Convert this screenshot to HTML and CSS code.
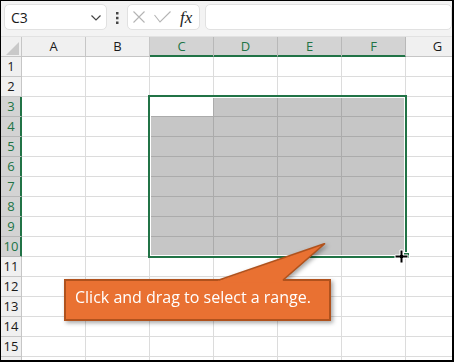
FILE: index.html
```html
<!DOCTYPE html>
<html lang="en">

<head>
    <meta charset="UTF-8">
    <title>Select a range</title>
    <link rel="stylesheet" href="styles.css">
</head>

<body>
    <div class="frame">
        <header class="toolbar">
            <div class="name-box">
                <span>C3</span>
                <svg class="chevron" width="10" height="6" viewBox="0 0 10 6">
                    <polyline points="0.5,0.5 5,5 9.5,0.5" fill="none" stroke="#444" stroke-width="1.2" />
                </svg>
            </div>
            <svg class="more" width="4" height="12" viewBox="0 0 4 12">
                <rect x="1" y="0" width="2.5" height="2.5" fill="#444" />
                <rect x="1" y="4.8" width="2.5" height="2.5" fill="#444" />
                <rect x="1" y="9.5" width="2.5" height="2.5" fill="#444" />
            </svg>
            <div class="fx-buttons">
                <svg class="cancel" width="12" height="12" viewBox="0 0 12 12">
                    <path d="M0.5 0.5 L11.5 11.5 M11.5 0.5 L0.5 11.5" stroke="#b4b4b4" stroke-width="1.1" />
                </svg>
                <svg class="enter" width="17" height="12" viewBox="0 0 17 12">
                    <polyline points="0.5,4 6,11 16.5,0.5" fill="none" stroke="#b4b4b4" stroke-width="1.1" />
                </svg>
                <span class="fx">fx</span>
            </div>
            <div class="formula-input"></div>
        </header>

        <section class="sheet">
            <div class="grid">
                <div class="hd corner"><svg width="13" height="13" viewBox="0 0 13 13"><polygon points="13,0 13,13 0,13" fill="#c9c9c9" /></svg></div>
                <div class="hd">A</div><div class="hd">B</div><div class="hd on">C</div><div class="hd on">D</div><div class="hd on">E</div><div class="hd on">F</div><div class="hd">G</div>

                <div class="rh">1</div><div class="c"></div><div class="c"></div><div class="c"></div><div class="c"></div><div class="c"></div><div class="c"></div><div class="c"></div>
                <div class="rh">2</div><div class="c"></div><div class="c"></div><div class="c"></div><div class="c"></div><div class="c"></div><div class="c"></div><div class="c"></div>
                <div class="rh on">3</div><div class="c"></div><div class="c"></div><div class="c act"></div><div class="c on"></div><div class="c on"></div><div class="c on"></div><div class="c"></div>
                <div class="rh on">4</div><div class="c"></div><div class="c"></div><div class="c on"></div><div class="c on"></div><div class="c on"></div><div class="c on"></div><div class="c"></div>
                <div class="rh on">5</div><div class="c"></div><div class="c"></div><div class="c on"></div><div class="c on"></div><div class="c on"></div><div class="c on"></div><div class="c"></div>
                <div class="rh on">6</div><div class="c"></div><div class="c"></div><div class="c on"></div><div class="c on"></div><div class="c on"></div><div class="c on"></div><div class="c"></div>
                <div class="rh on">7</div><div class="c"></div><div class="c"></div><div class="c on"></div><div class="c on"></div><div class="c on"></div><div class="c on"></div><div class="c"></div>
                <div class="rh on">8</div><div class="c"></div><div class="c"></div><div class="c on"></div><div class="c on"></div><div class="c on"></div><div class="c on"></div><div class="c"></div>
                <div class="rh on">9</div><div class="c"></div><div class="c"></div><div class="c on"></div><div class="c on"></div><div class="c on"></div><div class="c on"></div><div class="c"></div>
                <div class="rh on">10</div><div class="c"></div><div class="c"></div><div class="c on"></div><div class="c on"></div><div class="c on"></div><div class="c on"></div><div class="c"></div>
                <div class="rh">11</div><div class="c"></div><div class="c"></div><div class="c"></div><div class="c"></div><div class="c"></div><div class="c"></div><div class="c"></div>
                <div class="rh">12</div><div class="c"></div><div class="c"></div><div class="c"></div><div class="c"></div><div class="c"></div><div class="c"></div><div class="c"></div>
                <div class="rh">13</div><div class="c"></div><div class="c"></div><div class="c"></div><div class="c"></div><div class="c"></div><div class="c"></div><div class="c"></div>
                <div class="rh">14</div><div class="c"></div><div class="c"></div><div class="c"></div><div class="c"></div><div class="c"></div><div class="c"></div><div class="c"></div>
                <div class="rh">15</div><div class="c"></div><div class="c"></div><div class="c"></div><div class="c"></div><div class="c"></div><div class="c"></div><div class="c"></div>
                <div class="rh"></div><div class="c"></div><div class="c"></div><div class="c"></div><div class="c"></div><div class="c"></div><div class="c"></div><div class="c"></div>
            </div>

            <!-- overlays: selection outline, fill handle, mouse cursor, callout -->
            <div class="selection"></div>
            <div class="fill-handle"></div>
            <svg class="cursor" width="15" height="15" viewBox="0 0 15 15">
                <path d="M6 1 H9 V6 H14 V9 H9 V14 H6 V9 H1 V6 H6 Z" fill="#000" stroke="#fff" stroke-width="1" />
            </svg>

            <div class="callout">
                <div class="callout-box">Click and drag to select a range.</div>
                <svg class="callout-tail" width="267" height="40" viewBox="0 0 267 40">
                    <polygon points="149.3,39.5 261,0.5 216.7,39.5" fill="#e97132" />
                    <polyline points="155,37 261,0.5 219,37" fill="none" stroke="#b0521d" stroke-width="1.6" />
                </svg>
            </div>
        </section>
    </div>
</body>

</html>
```

FILE: styles.css
```css
*,
*::before,
*::after {
    box-sizing: border-box;
    margin: 0;
    padding: 0;
}

:root {
    --green: #217346;
    --grid: #dcdcdc;
    --head: #f0f0f0;
    --head-on: #d3d3d3;
    --orange: #e97132;
}

body {
    width: 454px;
    height: 362px;
    overflow: hidden;
    background: #fff;
    font-family: "Open Sans", "Noto Sans", sans-serif;
    color: #222;
}

.frame {
    width: 454px;
    height: 362px;
    border: solid #000;
    border-width: 1px 2px 2px 1px;
    display: flex;
    flex-direction: column;
    overflow: hidden;
}

/* formula bar */
.toolbar {
    flex: none;
    height: 36px;
    background: #f3f3f3;
    border-bottom: 1px solid #e2e2e2;
    display: flex;
    align-items: flex-start;
    padding: 3px 0 0 3px;
}

.name-box,
.fx-buttons,
.formula-input {
    height: 26px;
    background: #fff;
    border: 1px solid #e1e1e1;
    border-radius: 5px;
}

.name-box {
    width: 103px;
    display: flex;
    align-items: center;
    justify-content: space-between;
    padding: 0 5px 0 6px;
    font-size: 14px;
    color: #1a1a1a;
}

.chevron {
    margin-top: 1px;
}

.more {
    margin: 8px 8px 0 8px;
}

.fx-buttons {
    width: 73px;
    display: flex;
    align-items: center;
    padding-left: 5px;
}

.enter {
    margin-left: 9px;
}

.fx {
    margin-left: 9px;
    font-family: "Liberation Serif", serif;
    font-style: italic;
    font-size: 17px;
    color: #222;
    line-height: 1;
}

.formula-input {
    margin-left: 5px;
    flex: 1;
}

/* sheet */
.sheet {
    position: relative;
    flex: 1;
    overflow: hidden;
}

.grid {
    display: grid;
    grid-template-columns: 21px repeat(7, 64px);
    grid-auto-rows: 20px;
}

.hd,
.rh,
.c {
    border-right: 1px solid var(--grid);
    border-bottom: 1px solid var(--grid);
}

.hd,
.rh {
    background: var(--head);
    border-color: #c6c6c6;
    font-size: 13px;
    line-height: 19px;
    text-align: center;
    color: #1a1a1a;
}

.hd.on,
.rh.on {
    background: var(--head-on);
    color: var(--green);
    border-color: #b8b8b8;
}

.hd.on {
    border-bottom-color: var(--green);
    box-shadow: inset 0 -1px 0 var(--green);
}

.rh.on {
    border-right-color: var(--green);
    box-shadow: inset -1px 0 0 var(--green);
}

.corner {
    display: flex;
    align-items: flex-end;
    justify-content: flex-end;
    padding: 0 2px 1px 0;
}

.c.on {
    background: #c6c6c6;
    border-color: #ababab;
}

.c.act {
    border-color: #ababab;
}

.selection {
    position: absolute;
    left: 147px;
    top: 58px;
    width: 259px;
    height: 163px;
    border: 2px solid var(--green);
    box-shadow: inset 0 0 0 1px #fff;
}

.fill-handle {
    position: absolute;
    left: 402px;
    top: 215px;
    width: 7px;
    height: 7px;
    background: var(--green);
    border: 1px solid #fff;
}

.cursor {
    position: absolute;
    left: 393px;
    top: 212px;
}

/* callout */
.callout {
    position: absolute;
    left: 63px;
    top: 206px;
    width: 267px;
    height: 78px;
    filter: drop-shadow(2px 2px 2px rgba(0, 0, 0, 0.35));
}

.callout-box {
    position: absolute;
    left: 0;
    top: 36px;
    width: 267px;
    height: 42px;
    background: var(--orange);
    border: 2px solid #b0521d;
    color: #fff;
    font-size: 16px;
    line-height: 33px;
    padding-left: 9px;
    white-space: nowrap;
}

.callout-tail {
    position: absolute;
    left: 0;
    top: 0;
}
```
